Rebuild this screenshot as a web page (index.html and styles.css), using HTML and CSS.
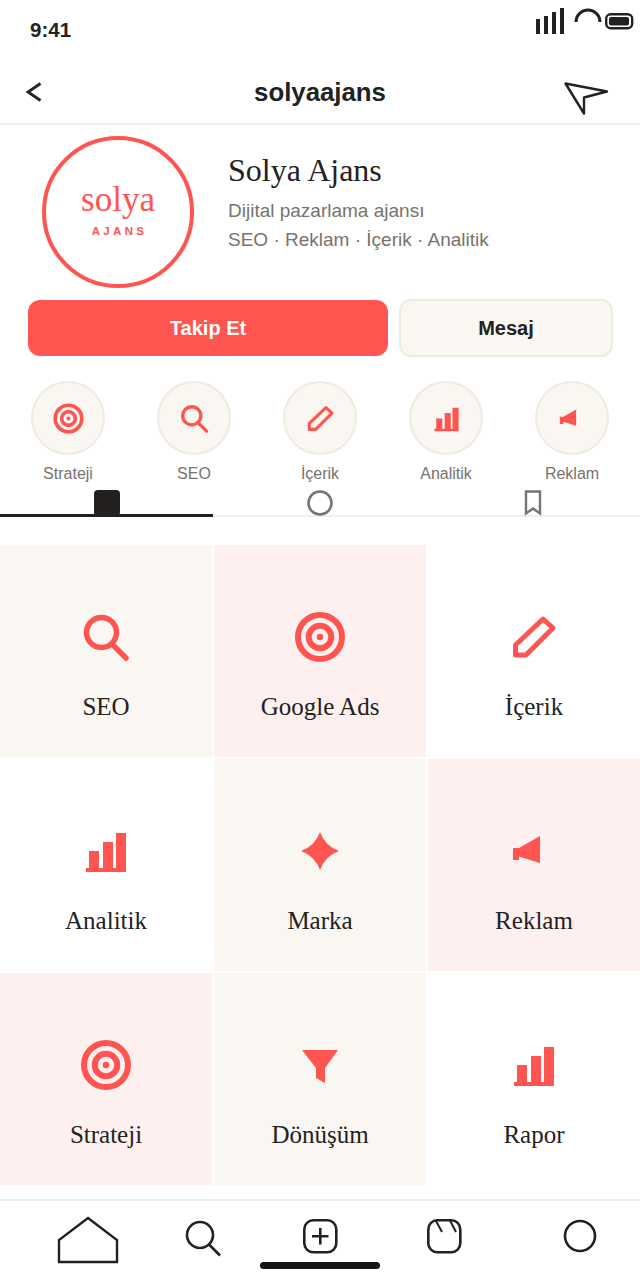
FILE: index.html
```html
<!doctype html>
<html lang="tr">
<head>
<meta charset="utf-8">
<meta name="viewport" content="width=device-width">
<title>solyaajans</title>
<link rel="stylesheet" href="styles.css">
</head>
<body>
<svg class="defs" width="0" height="0">
  <symbol id="i-target" viewBox="0 0 48 48">
    <circle cx="24" cy="24" r="22" fill="none" stroke="currentColor" stroke-width="6"/>
    <circle cx="24" cy="24" r="11.3" fill="none" stroke="currentColor" stroke-width="6"/>
    <circle cx="24" cy="24" r="3.3" fill="currentColor"/>
  </symbol>
  <symbol id="i-search" viewBox="0 0 48 48">
    <circle cx="19.5" cy="19.5" r="15" fill="none" stroke="currentColor" stroke-width="5.5"/>
    <path d="M30 31 L44 45" fill="none" stroke="currentColor" stroke-width="5.5" stroke-linecap="round"/>
  </symbol>
  <symbol id="i-pencil" viewBox="0 0 48 48">
    <path d="M33 6 L43 15 L16 42 L5.5 42 L5.5 32 Z" fill="none" stroke="currentColor" stroke-width="5" stroke-linejoin="round"/>
  </symbol>
  <symbol id="i-bars" viewBox="0 0 48 48">
    <path d="M7 24 H17 V41 H21 V15 H31 V41 H34 V6 H44 V45 H4 V41 H7 Z" fill="currentColor"/>
  </symbol>
  <symbol id="i-horn" viewBox="0 0 48 48">
    <path d="M3 21 H9 L30 9 V36 L9 29.5 V33 H3 Z" fill="currentColor"/>
  </symbol>
  <symbol id="i-star" viewBox="0 0 48 48">
    <path d="M24 5 Q29 19 43 24 Q29 29 24 43 Q19 29 5 24 Q19 19 24 5 Z" fill="currentColor"/>
  </symbol>
  <symbol id="i-funnel" viewBox="0 0 48 48">
    <path d="M6 9 H42 L29 27 V42 L20 37 V27 Z" fill="currentColor"/>
  </symbol>
</svg>

<div class="phone">
  <div class="status">
    <span class="time">9:41</span>
    <svg class="status-icons" width="100" height="30" viewBox="0 0 100 30">
      <rect x="0" y="11" width="4" height="15"/>
      <rect x="8" y="8" width="4" height="18"/>
      <rect x="16" y="4" width="4" height="22"/>
      <rect x="24" y="0" width="4" height="26"/>
      <path d="M40 14 A12 12 0 0 1 64 14" fill="none" stroke="#222" stroke-width="3"/>
      <rect x="70.2" y="6.2" width="26" height="14" rx="4.5" fill="none" stroke="#222" stroke-width="2.4"/>
      <rect x="73" y="9" width="20" height="8.5" rx="2"/>
    </svg>
  </div>

  <div class="nav">
    <svg class="nav-back" width="16" height="20" viewBox="0 0 16 20"><path d="M14.5 1.5 L2 10 L14.5 18.5" fill="none" stroke="#222" stroke-width="2.8"/></svg>
    <span class="nav-title">solyaajans</span>
    <svg class="nav-send" width="44" height="34" viewBox="0 0 44 34"><path d="M1.5 1.5 L43 9.5 L20 15.5 L20 31.5 Z" fill="none" stroke="#222" stroke-width="2.4" stroke-linejoin="round"/></svg>
  </div>

  <div class="profile">
    <div class="avatar">
      <span class="logo-word">solya</span>
      <span class="logo-sub">AJANS</span>
    </div>
    <div class="info">
      <h1 class="name">Solya Ajans</h1>
      <p class="desc">Dijital pazarlama ajansı</p>
      <p class="desc">SEO · Reklam · İçerik · Analitik</p>
    </div>
  </div>

  <div class="actions">
    <button class="btn btn-main">Takip Et</button>
    <button class="btn btn-alt">Mesaj</button>
  </div>

  <div class="stories">
    <div class="story"><div class="story-ring"><svg class="ico-s"><use href="#i-target"/></svg></div><span>Strateji</span></div>
    <div class="story"><div class="story-ring"><svg class="ico-s"><use href="#i-search"/></svg></div><span>SEO</span></div>
    <div class="story"><div class="story-ring"><svg class="ico-s"><use href="#i-pencil"/></svg></div><span>İçerik</span></div>
    <div class="story"><div class="story-ring"><svg class="ico-s"><use href="#i-bars"/></svg></div><span>Analitik</span></div>
    <div class="story"><div class="story-ring"><svg class="ico-s"><use href="#i-horn"/></svg></div><span>Reklam</span></div>
  </div>

  <div class="tabs">
    <div class="tab on"><svg width="26" height="26" viewBox="0 0 26 26"><rect width="26" height="26" rx="4" fill="#231f1c"/></svg></div>
    <div class="tab"><svg width="26" height="26" viewBox="0 0 26 26"><circle cx="13" cy="13" r="11.5" fill="none" stroke="#77736d" stroke-width="2.6"/></svg></div>
    <div class="tab"><svg width="18" height="26" viewBox="0 0 18 26"><path d="M2 1.5 H16 V23.5 L9 18.5 L2 23.5 Z" fill="none" stroke="#77736d" stroke-width="2.4"/></svg></div>
  </div>

  <div class="grid">
    <div class="cell cream"><svg class="ico"><use href="#i-search"/></svg><span>SEO</span></div>
    <div class="cell pink"><svg class="ico"><use href="#i-target"/></svg><span>Google Ads</span></div>
    <div class="cell"><svg class="ico"><use href="#i-pencil"/></svg><span>İçerik</span></div>
    <div class="cell"><svg class="ico"><use href="#i-bars"/></svg><span>Analitik</span></div>
    <div class="cell cream"><svg class="ico"><use href="#i-star"/></svg><span>Marka</span></div>
    <div class="cell pink"><svg class="ico"><use href="#i-horn"/></svg><span>Reklam</span></div>
    <div class="cell pink"><svg class="ico"><use href="#i-target"/></svg><span>Strateji</span></div>
    <div class="cell cream"><svg class="ico"><use href="#i-funnel"/></svg><span>Dönüşüm</span></div>
    <div class="cell"><svg class="ico"><use href="#i-bars"/></svg><span>Rapor</span></div>
  </div>

  <div class="bottom">
    <svg width="60" height="48" viewBox="0 0 60 48"><path d="M30 2 L59 24 V46 H1 V24 Z" fill="none" stroke="#222" stroke-width="2.4"/></svg>
    <svg width="36" height="48" viewBox="0 0 36 48"><circle cx="15" cy="19" r="13" fill="none" stroke="#222" stroke-width="2.6"/><path d="M24.5 29 L35 39.5" fill="none" stroke="#222" stroke-width="2.6"/></svg>
    <svg width="36" height="48" viewBox="0 0 36 48"><rect x="2.3" y="4.3" width="32" height="32" rx="9" fill="none" stroke="#222" stroke-width="2.6"/><path d="M18.3 12 V28.5 M10 20.3 H26.5" fill="none" stroke="#222" stroke-width="2.6"/></svg>
    <svg width="36" height="48" viewBox="0 0 36 48"><rect x="2.3" y="4.3" width="32" height="32" rx="9" fill="none" stroke="#222" stroke-width="2.6"/><path d="M10 5 L16 16 M24 4.5 L30 16" fill="none" stroke="#222" stroke-width="2"/></svg>
    <svg width="34" height="48" viewBox="0 0 34 48"><circle cx="17" cy="20" r="15" fill="none" stroke="#222" stroke-width="2.6"/></svg>
  </div>
  <div class="home-bar"></div>
</div>
</body>
</html>
```

FILE: styles.css
```css
html,body{margin:0; padding:0; background:#fff}
body{font-family:"Liberation Sans",Arial,sans-serif; color:#222}
svg{overflow:visible}
symbol{overflow:visible}
.defs{display:block; height:0}
.phone{position:relative; width:640px; height:1280px; overflow:hidden; display:flex; flex-direction:column; background:#fff}

.status{height:60px; display:flex; justify-content:space-between; align-items:flex-start; padding:0 4px 0 30px; box-sizing:border-box}
.time{font-size:20.5px; font-weight:bold; line-height:24px; margin-top:18px}
.status-icons{display:block; margin-top:8px; fill:#222}

.nav{height:65px; box-sizing:border-box; border-bottom:2px solid #eeeeee; display:grid; grid-template-columns:1fr auto 1fr; align-items:start; padding:0 32px}
.nav-back{margin:22px 0 0 -6px}
.nav-title{font-size:25.8px; font-weight:bold; line-height:32px; margin-top:16px}
.nav-send{justify-self:end; margin-top:22px}

.profile{display:flex; padding:11px 0 0 42px; gap:34px}
.avatar{width:152px; height:152px; box-sizing:border-box; border:4px solid #ff5450; border-radius:50%; display:flex; flex-direction:column; align-items:center; color:#ff5450; padding-top:38px}
.logo-word{font:normal 35px/44px "Liberation Serif",serif}
.logo-sub{font-size:11.5px; line-height:14px; font-weight:bold; letter-spacing:3.3px; margin:2px 0 0 3px}
.info{padding-top:15px}
.name{margin:0 0 7px; font:normal 32px/38px "Liberation Serif",serif; color:#222}
.desc{margin:0; font-size:19px; line-height:29px; color:#77736d}

.actions{display:flex; gap:12px; padding:12px 28px 0}
.btn{height:56px; box-sizing:border-box; border-radius:12px; font:bold 20px "Liberation Sans",sans-serif; padding:1px 0 0}
.btn-main{width:360px; background:#ff5450; color:#fff; border:0}
.btn-alt{width:214px; height:58px; margin:-1px -1px -1px -1px; background:#faf6f1; color:#222; border:2px solid #f0eadf}

.stories{display:grid; grid-template-columns:repeat(5,74px); column-gap:52px; padding:25px 0 0 31px}
.story{display:flex; flex-direction:column; align-items:center; font-size:16px; line-height:18px; color:#77736d; white-space:nowrap}
.story-ring{width:74px; height:74px; box-sizing:border-box; border:2px solid #f0eadf; border-radius:50%; background:#faf6f1; display:flex; align-items:center; justify-content:center; margin-bottom:10px}
.ico-s{width:29px; height:29px; color:#ff5450}

.tabs{display:grid; grid-template-columns:213px 1fr 1fr; height:27px; margin-top:7px}
.tab{display:flex; justify-content:center; border-bottom:2px solid #f2efe8; height:25px}
.tab.on{border-bottom:3px solid #231f1c; height:24px}
.tab svg{display:block; flex:none}

.grid{display:grid; grid-template-columns:repeat(3,212px); grid-auto-rows:212px; gap:2px; margin-top:28px}
.cell{display:flex; flex-direction:column; align-items:center; padding-top:68px; box-sizing:border-box; font:normal 25px/32px "Liberation Serif",serif; color:#222}
.cell span{margin-top:30px}
.cream{background:#faf6f1}
.pink{background:#fdf0ee}
.ico{width:48px; height:48px; color:#ff5450}

.bottom{margin-top:14px; height:81px; box-sizing:border-box; border-top:2px solid #eeeeee; display:grid; grid-template-columns:127px 117px 124px 137px auto; padding:15px 0 0 58px; align-items:start}
.home-bar{position:absolute; left:260px; top:1262px; width:120px; height:7px; border-radius:4px; background:#111}
```
